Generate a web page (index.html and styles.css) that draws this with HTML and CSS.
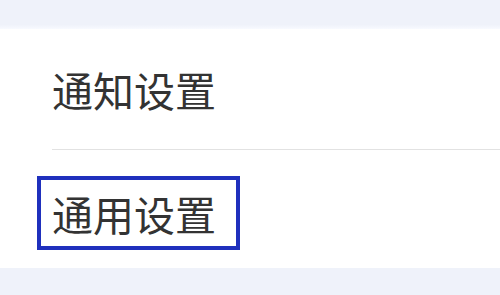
FILE: index.html
```html
<!DOCTYPE html>
<html lang="zh-CN">

<head>
    <meta charset="UTF-8">
    <meta name="viewport" content="width=device-width, initial-scale=1.0">
    <title>设置</title>
    <link rel="stylesheet" href="styles.css">
</head>

<body>
    <!-- 顶部灰色间隔 -->
    <div class="gap-top"></div>
    <!-- 设置列表 -->
    <ul class="settings">
        <li class="item">
            <a href="#" class="item-text">通知设置</a>
        </li>
        <li class="item item-focus">
            <a href="#" class="item-text">通用设置</a>
        </li>
    </ul>
</body>

</html>
```

FILE: styles.css
```css
* {
    margin: 0;
    padding: 0;
}

li {
    list-style: none;
}

a {
    color: #333;
    text-decoration: none;
}

body {
    width: 500px;
    height: 295px;
    overflow: hidden;
    background-color: #eff2fa;
    font-family: "Noto Sans CJK SC", "Noto Sans", sans-serif;
}

.gap-top {
    height: 29px;
    background: linear-gradient(#eff2fa 0, #eff2fa 85%, #f8faff 100%);
}

.settings {
    height: 239px;
    background-color: #fff;
}

.item {
    display: flex;
    align-items: center;
    height: 120px;
    margin-left: 52px;
    border-bottom: 1px solid #e2e2e2;
}

.item-text {
    font-size: 41px;
    line-height: 66px;
    color: #333;
}

.item-focus {
    box-sizing: border-box;
    height: 118px;
    margin-left: 0;
    padding: 8px 0 0 37px;
    border-bottom: 0;
}

.item-focus .item-text {
    border: 4px solid #1f30bd;
    padding: 0 20px 0 11px;
}
```
